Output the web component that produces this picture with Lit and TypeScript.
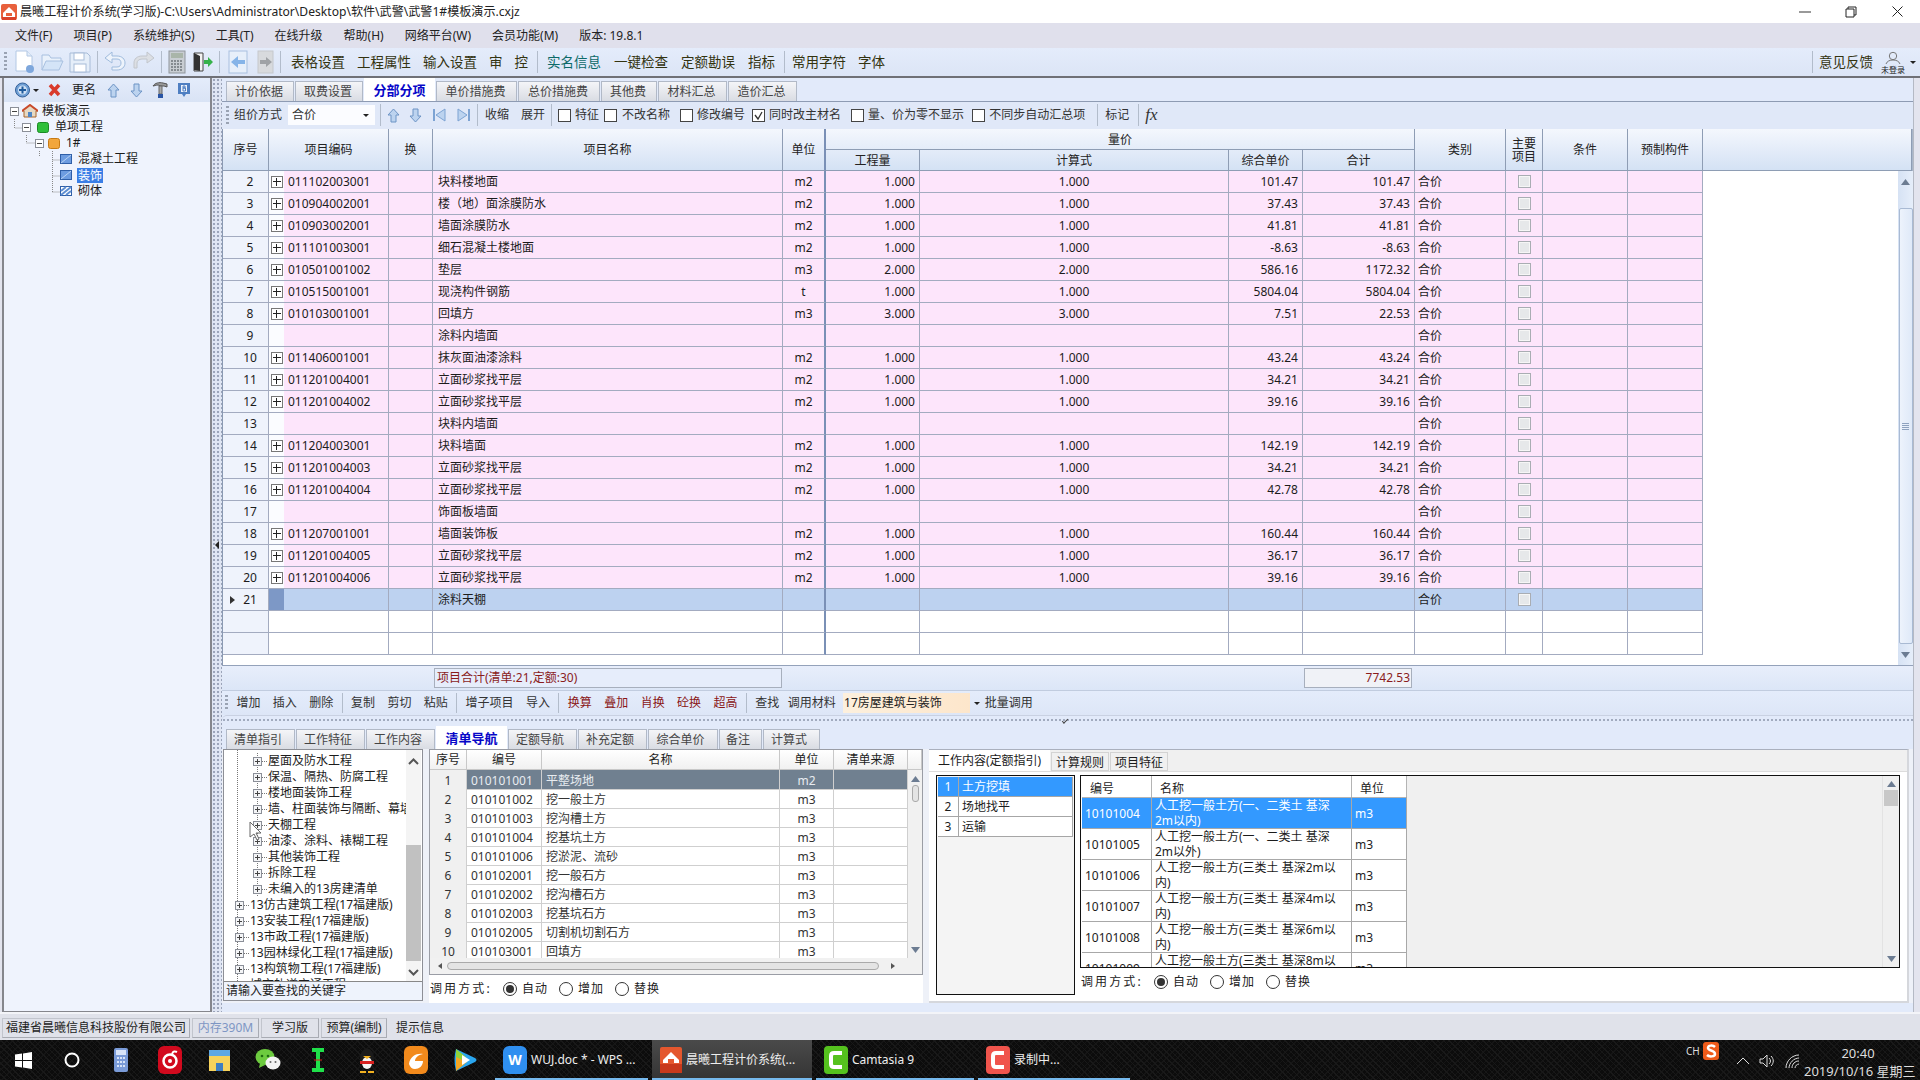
import { LitElement, html, css, nothing, svg } from "lit";
import { customElement } from "lit/decorators.js";

type Row = [string, string, string, string, string, string, string, string];
const D = "1.000";
const rows: Row[] = [
  ["2", "011102003001", "块料楼地面", "m2", D, D, "101.47", "101.47"],
  ["3", "010904002001", "楼（地）面涂膜防水", "m2", D, D, "37.43", "37.43"],
  ["4", "010903002001", "墙面涂膜防水", "m2", D, D, "41.81", "41.81"],
  ["5", "011101003001", "细石混凝土楼地面", "m2", D, D, "-8.63", "-8.63"],
  ["6", "010501001002", "垫层", "m3", "2.000", "2.000", "586.16", "1172.32"],
  ["7", "010515001001", "现浇构件钢筋", "t", D, D, "5804.04", "5804.04"],
  ["8", "010103001001", "回填方", "m3", "3.000", "3.000", "7.51", "22.53"],
  ["9", "", "涂料内墙面", "", "", "", "", ""],
  ["10", "011406001001", "抹灰面油漆涂料", "m2", D, D, "43.24", "43.24"],
  ["11", "011201004001", "立面砂浆找平层", "m2", D, D, "34.21", "34.21"],
  ["12", "011201004002", "立面砂浆找平层", "m2", D, D, "39.16", "39.16"],
  ["13", "", "块料内墙面", "", "", "", "", ""],
  ["14", "011204003001", "块料墙面", "m2", D, D, "142.19", "142.19"],
  ["15", "011201004003", "立面砂浆找平层", "m2", D, D, "34.21", "34.21"],
  ["16", "011201004004", "立面砂浆找平层", "m2", D, D, "42.78", "42.78"],
  ["17", "", "饰面板墙面", "", "", "", "", ""],
  ["18", "011207001001", "墙面装饰板", "m2", D, D, "160.44", "160.44"],
  ["19", "011201004005", "立面砂浆找平层", "m2", D, D, "36.17", "36.17"],
  ["20", "011201004006", "立面砂浆找平层", "m2", D, D, "39.16", "39.16"],
];
const navRows = [
  ["010101001", "平整场地", "m2"],
  ["010101002", "挖一般土方", "m3"],
  ["010101003", "挖沟槽土方", "m3"],
  ["010101004", "挖基坑土方", "m3"],
  ["010101006", "挖淤泥、流砂", "m3"],
  ["010102001", "挖一般石方", "m3"],
  ["010102002", "挖沟槽石方", "m3"],
  ["010102003", "挖基坑石方", "m3"],
  ["010102005", "切割机切割石方", "m3"],
  ["010103001", "回填方", "m3"],
];
const quotas = [
  ["10101004", "人工挖一般土方(一、二类土 基深\n2m以内)"],
  ["10101005", "人工挖一般土方(一、二类土 基深\n2m以外)"],
  ["10101006", "人工挖一般土方(三类土 基深2m以\n内)"],
  ["10101007", "人工挖一般土方(三类土 基深4m以\n内)"],
  ["10101008", "人工挖一般土方(三类土 基深6m以\n内)"],
  ["10101009", "人工挖一般土方(三类土 基深8m以\n内)"],
];
const lowerTree: [number, string][] = [
  [2, "屋面及防水工程"], [2, "保温、隔热、防腐工程"], [2, "楼地面装饰工程"],
  [2, "墙、柱面装饰与隔断、幕墙工程"], [2, "天棚工程"], [2, "油漆、涂料、裱糊工程"],
  [2, "其他装饰工程"], [2, "拆除工程"], [2, "未编入的13房建清单"],
  [1, "13仿古建筑工程(17福建版)"], [1, "13安装工程(17福建版)"], [1, "13市政工程(17福建版)"],
  [1, "13园林绿化工程(17福建版)"], [1, "13构筑物工程(17福建版)"], [1, "城市轨道交通工程"],
];

const ico = (w: number, h: number, body: unknown) =>
  html`<svg width=${w} height=${h} viewBox="0 0 ${w} ${h}">${body}</svg>`;

const icons = {
  app: ico(16, 16, svg`<rect width="16" height="16" rx="2" fill="#e8603c"/><path d="M2 9 8 3l6 6v5H2z" fill="#fff"/><path d="M5 9h6v3H5z" fill="#e8603c"/><rect x="1" y="13" width="14" height="3" fill="#d9412a"/>`),
  newf: ico(21, 24, svg`<path d="M2 1h11l5 5v15H2z" fill="#fff" stroke="#b3c8e4"/><path d="M13 1v5h5" fill="#e2ecf8" stroke="#b3c8e4"/><circle cx="16" cy="19" r="4" fill="#7ea7dc"/>`),
  open: ico(24, 22, svg`<path d="M2 19V4h7l2 3h10v3" fill="#e9f1fb" stroke="#a8c0e0"/><path d="M2 19l4-9h17l-4 9z" fill="#d4e4f7" stroke="#a8c0e0"/>`),
  save: ico(22, 22, svg`<path d="M1 2h17l3 3v16H1z" fill="#e5eef9" stroke="#a8bcd8"/><rect x="5" y="2" width="10" height="7" fill="#fff" stroke="#a8bcd8"/><rect x="5" y="13" width="12" height="8" fill="#fff" stroke="#a8bcd8"/>`),
  undo: ico(23, 22, svg`<path d="M1 7l7-6v4h5c5 0 8 3 8 7s-3 7-8 7H8v-3h5c3 0 4-2 4-4s-1-4-4-4H8v4z" fill="#edf3fb" stroke="#9fbbdd"/>`),
  redo: ico(23, 22, svg`<path d="M22 7l-7-6v4h-5C5 5 2 8 2 12v5h3v-5c0-2 2-4 5-4h5v4z" fill="#dcdfe4" stroke="#c2c6cc"/>`),
  calc: ico(18, 24, svg`<rect x="1" y="1" width="16" height="22" fill="#c8cdd2" stroke="#8f959c"/><rect x="3" y="3" width="12" height="5" fill="#a9b5a9"/><path d="M3 11h12M3 14h12M3 17h12M3 20h12" stroke="#858b90" stroke-width="2" stroke-dasharray="2 1"/>`),
  exit: ico(20, 20, svg`<path d="M1 1h9v18H1z" fill="#f2f2f2" stroke="#444"/><path d="M1 1l6 3v15l-6-1z" fill="#333"/><path d="M11 8h4V5l5 5-5 5v-3h-4z" fill="#36b24a"/>`),
  back: ico(20, 24, svg`<rect x="1" y="1" width="18" height="22" fill="#e7effa" stroke="#a9c0df"/><path d="M3 12l7-6v4h7v4h-7v4z" fill="#86b4e8"/>`),
  fwd: ico(17, 24, svg`<rect x="1" y="1" width="15" height="22" fill="#d8dadd" stroke="#c5c8cc"/><path d="M15 12l-6-5v3H3v4h6v3z" fill="#9fa2a6"/>`),
  upB: (d: boolean) => ico(13, 15, svg`<path d=${d ? "M6.500 14 1 8h3V1h5v7h3z" : "M6.500 1 1 7h3v7h5V7h3z"} fill="#bcd3ef" stroke="#6d94c5"/>`),
  first: ico(13, 14, svg`<path d="M1 1v12" stroke="#7da3d3" stroke-width="2"/><path d="M12 1v12L3 7z" fill="#bcd3ef" stroke="#7da3d3"/>`),
  last: ico(13, 14, svg`<path d="M12 1v12" stroke="#7da3d3" stroke-width="2"/><path d="M1 1v12l9-6z" fill="#bcd3ef" stroke="#7da3d3"/>`),
  plusC: ico(15, 16, svg`<circle cx="7.500" cy="8" r="7" fill="#6f9fd4" stroke="#335f98"/><circle cx="7.500" cy="8" r="4.500" fill="#cfe0f4"/><path d="M7.500 4.500v7M4 8h7" stroke="#1f5b9c" stroke-width="2"/>`),
  del: ico(13, 14, svg`<path d="M2 2l9 10M11 2 2 12" stroke="#d93a2b" stroke-width="3.500"/>`),
  hammer: ico(16, 18, svg`<path d="M1 5c2-3 6-4 10-3l4 1v3l-3-1H9L6 4C4 4 2 5 1 5z" fill="#9a9a9a" stroke="#555"/><path d="M7 5h3v8H7z" fill="#a9a9a9" stroke="#666"/><rect x="6" y="13" width="5" height="4" fill="#2a55a5"/>`),
  bmark: ico(14, 16, svg`<path d="M1 1h12v11H9l-2 3-2-3H1z" fill="#4f7fc2"/><rect x="4" y="3" width="6" height="7" fill="#fff" opacity=".9"/><path d="M6 4v5M6 4h2v2H6M6 6h2.500v3H6" stroke="#4f7fc2" fill="none"/>`),
  house: ico(16, 14, svg`<path d="M0 7 8 1l8 6-2 0v6H2V7z" fill="#e6d9c3" stroke="#a8642c"/><path d="M0 7 8 1l8 6" fill="none" stroke="#c94a2b" stroke-width="2"/><rect x="6" y="8" width="4" height="5" fill="#4f86c6"/>`),
  cube: (c: string, d: string, w = 12) => ico(w, 11, svg`<rect x=".5" y=".5" width=${w - 1} height="10" rx="2" fill=${c} stroke=${d}/>`),
  blue: ico(12, 10, svg`<rect x=".5" y=".5" width="11" height="9" fill="#6d9ce0" stroke="#2f5fa8"/><path d="M1 9 11 1" stroke="#b9d3f3"/>`),
  stripe: ico(12, 10, svg`<rect x=".5" y=".5" width="11" height="9" fill="#fff" stroke="#2f5fa8"/><path d="M1 9 11 1M1 5l5-4M6 9l5-4" stroke="#5d8dd2" stroke-width="2"/>`),
  user: ico(16, 14, svg`<circle cx="8" cy="5" r="3.700" fill="none" stroke="#777"/><path d="M1 13c1-3 4-4 7-4s6 1 7 4" fill="none" stroke="#777"/>`),
  up: ico(9, 6, svg`<path d="M4.500 0 9 6H0z" fill="#6c7c92"/>`),
  down: ico(9, 6, svg`<path d="M4.500 6 9 0H0z" fill="#6c7c92"/>`),
  chevU: ico(11, 7, svg`<path d="M1 6 5.500 1.500 10 6" fill="none" stroke="#555" stroke-width="2"/>`),
  chevD: ico(11, 7, svg`<path d="M1 1l4.500 4.500L10 1" fill="none" stroke="#555" stroke-width="2"/>`),
  check: ico(11, 11, svg`<path d="M2 5l3 4 4-7" fill="none" stroke="#333" stroke-width="1.300"/>`),
  cursor: ico(14, 20, svg`<path d="M1 1v15l4-3 3 6 2-1-3-6h5z" fill="#fff" stroke="#666"/>`),
  restore: ico(12, 12, svg`<path d="M3 3V1h8v8H9M1 3h8v8H1z" fill="#fff" stroke="#222"/>`),
  close: ico(11, 11, svg`<path d="M.5.500l10 10M10.500.500l-10 10" stroke="#222"/>`),
  win: ico(17, 17, svg`<path d="M0 2.500 7 1.500v6.500H0zM8 1.400 17 0v8H8zM0 9h7v6.500l-7-1zM8 9h9v8l-9-1.400z" fill="#fff"/>`),
  ring: ico(16, 16, svg`<circle cx="8" cy="8" r="6.500" fill="none" stroke="#fff" stroke-width="2"/>`),
  tcalc: ico(16, 26, svg`<rect x="1" y="1" width="14" height="24" rx="2" fill="#7a9bd8"/><rect x="3" y="3" width="10" height="5" fill="#d8e4f8"/><path d="M4 11h8M4 15h8M4 19h8" stroke="#d8e4f8" stroke-width="2" stroke-dasharray="2 1"/>`),
  netease: ico(24, 28, svg`<rect width="24" height="28" rx="6" fill="#d20a1e"/><circle cx="12" cy="15" r="6.500" fill="none" stroke="#fff" stroke-width="2.500"/><circle cx="12" cy="15" r="2" fill="#fff"/><path d="M14 8c1-3 3-3 5-2" fill="none" stroke="#fff" stroke-width="2"/>`),
  folder: ico(23, 25, svg`<path d="M1 2h21v21H1z" fill="#f7d35b"/><path d="M1 2h21v6H1z" fill="#5ea8e3"/><rect x="8" y="15" width="7" height="8" fill="#3f7fc2"/>`),
  wechat: ico(26, 24, svg`<ellipse cx="10" cy="9" rx="9.500" ry="8" fill="#6dcb3f"/><path d="M5 15l-1 5 6-3z" fill="#6dcb3f"/><ellipse cx="18" cy="15" rx="7.500" ry="6.500" fill="#f2f2f2"/><circle cx="7" cy="8" r="1.300" fill="#1f6b12"/><circle cx="13" cy="8" r="1.300" fill="#1f6b12"/><circle cx="15.500" cy="14" r="1" fill="#666"/><circle cx="20.500" cy="14" r="1" fill="#666"/>`),
  beam: ico(14, 26, svg`<path d="M1 1h12v4H9v16h4v4H1v-4h4V5H1z" fill="#1fe04a"/><path d="M3 13h8" stroke="#d81b1b"/>`),
  qq: ico(18, 26, svg`<ellipse cx="9" cy="11" rx="7" ry="9.500" fill="#1b1b1b"/><ellipse cx="9" cy="16" rx="5" ry="6" fill="#f5f5f5"/><path d="M2 14h14v3H2z" fill="#d82020"/><path d="M5 9h8l-4 3z" fill="#f2b120"/><path d="M2 24h6v2H2zM10 24h6v2h-6z" fill="#f2b120"/>`),
  uc: ico(24, 28, svg`<rect width="24" height="28" rx="6" fill="#f28a1c"/><path d="M5 18c1-8 8-11 14-10-5 1-8 4-8 7h8c0 5-4 8-8 8-3 0-5-2-6-5z" fill="#fff"/>`),
  video: ico(24, 26, svg`<path d="M3 2c-2 7-2 15 0 22l19-9c2-1 2-3 0-4z" fill="#2aa6ef"/><path d="M3 2l10 8-10 6z" fill="#8fd43a"/><path d="M3 24l11-9-11-5z" fill="#f4a724"/><path d="M9 8v10l8-5z" fill="#fff"/>`),
  tapp: ico(22, 26, svg`<rect width="22" height="26" rx="2" fill="#e4572e"/><path d="M3 13 11 5l8 8v3H3z" fill="#fff"/><path d="M8 12h6v4H8z" fill="#e4572e"/><rect y="17" width="22" height="9" fill="#c8391c"/>`),
  cam: ico(24, 28, svg`<rect width="24" height="28" rx="4" fill="#55c21e"/><path d="M18 7h-8c-2 0-3 1-3 3v8c0 2 1 3 3 3h8" fill="none" stroke="#fff" stroke-width="4"/>`),
  rec: ico(24, 28, svg`<rect width="24" height="28" rx="4" fill="#f0544c"/><path d="M18 7h-8c-2 0-3 1-3 3v8c0 2 1 3 3 3h8" fill="none" stroke="#fff" stroke-width="4"/>`),
  sogou: ico(16, 18, svg`<rect width="16" height="18" rx="3" fill="#ee5b1a"/><path d="M12 5c-2-2-7-2-7 1 0 3 7 2 7 6 0 3-6 3-8 1" fill="none" stroke="#fff" stroke-width="2.500"/>`),
  caretT: ico(14, 8, svg`<path d="M1 7l6-6 6 6" fill="none" stroke="#ddd"/>`),
  speaker: ico(16, 16, svg`<path d="M1 6h3l4-4v12l-4-4H1z" fill="none" stroke="#ddd"/><path d="M10 5c2 2 2 4 0 6M12 3c3 3 3 7 0 10" fill="none" stroke="#ddd"/>`),
  wifi: ico(16, 16, svg`<path d="M2 15C2 8 8 2 15 2M5 15c0-5 5-10 10-10M8 15c0-4 3-7 7-7M11 15c0-2 2-4 4-4" fill="none" stroke="#ddd"/>`),
};

@customElement("app-root")
export class AppRoot extends LitElement {
  static styles = css`
    :host { display: block; width: 1920px; height: 1080px; overflow: hidden; position: relative; }
    * { box-sizing: border-box; }
    .app { width: 1920px; height: 1080px; display: flex; flex-direction: column; background: #e3e4ee;
      font: 12px/16px "Noto Sans", "Noto Sans CJK SC", sans-serif; color: #1c1c1c; }
    svg { display: block; flex: none; }
    .title { height: 23px; background: #fff; display: flex; align-items: center; padding: 0 0 0 1px; font-size: 12.1px; color: #222; }
    .title-t { margin-left: 3px; flex: 1; white-space: nowrap; }
    .winb { display: flex; align-items: center; }
    .winb span { width: 46px; display: flex; justify-content: center; }
    .minb { width: 12px; height: 2px; background: #999; }
    .menu { height: 25px; background: #e0e0ec; display: flex; align-items: center; gap: 21px; padding: 1px 0 0 15px; color: #222; }
    .tb { height: 30px; background: linear-gradient(#e4ecfb, #dce5f6); border-bottom: 2px solid #6f7076; display: flex; align-items: center; padding-left: 4px; font-size: 13.5px; color: #333310; position: relative; }
    .grip { width: 3px; align-self: stretch; margin: 4px 0; background: repeating-linear-gradient(#9aa3b3 0 2px, transparent 2px 4px); flex: none; }
    .g5 { display: flex; align-items: center; gap: 5px; }
    .vsep { width: 1px; height: 22px; background: #b2bccb; flex: none; margin: 0 6px; }
    .tb-txt { display: flex; align-items: center; gap: 12px; white-space: nowrap; }
    .tb-txt.w { gap: 13px; }
    .teal { color: #0c6a68; }
    .fill { flex: 1; }
    .user { width: 24px; display: flex; flex-direction: column; align-items: center; margin: 0 5px 0 8px; }
    .user small { font-size: 8px; line-height: 9px; color: #222; white-space: nowrap; }
    .body { flex: 1; display: flex; min-height: 0; }
    .lpanel { width: 210px; margin-left: 2px; border-left: 2px solid #85868c; border-right: 2px solid #85868c; border-bottom: 1px solid #85868c; display: flex; flex-direction: column; background: #eff3fd; }
    .ltb { height: 24px; background: linear-gradient(#e4ecfb, #d9e3f5); display: flex; align-items: center; padding-left: 11px; flex: none; }
    .ltree { flex: 1; padding-top: 1px; position: relative; }
    .tr { height: 16px; display: flex; align-items: center; white-space: nowrap; }
    .trtxt { padding: 0 1px; line-height: 15px; }
    .hl { background: #3a7ee6; color: #fff; }
    .pbox { width: 9px; height: 9px; border: 1px solid #8b8f98; background: linear-gradient(#444, #444) center/5px 1px no-repeat, #fff; flex: none; }
    .pbox.pl { background: linear-gradient(#444, #444) center/5px 1px no-repeat, linear-gradient(#444, #444) center/1px 5px no-repeat, #f4f5f7; }
    .conn { position: absolute; left: 0; top: 0; pointer-events: none; }
    .split { width: 10px; display: flex; align-items: center; justify-content: center; background-color: #dfe5f3;
      background-image: radial-gradient(#9aa3b8 0.7px, transparent 1px); background-size: 4px 4px; flex: none; }
    .split i { width: 0; height: 0; border: 4px solid transparent; border-right-color: #222; margin-left: -4px; }
    .main { width: 1692px; display: flex; flex-direction: column; min-height: 0; background: #e2eafa; border-right: 1px solid #b4b9c4; }
    .tabs { display: flex; align-items: flex-end; gap: 1px; padding-left: 4px; flex: none; }
    .tab { height: 20px; text-align: center; border: 1px solid #b1b9c7; border-bottom: none; background: linear-gradient(#f4f5f8, #d9dce3); color: #444; line-height: 20px; flex: none; white-space: nowrap; }
    .tab.on { height: 23px; background: #fff; color: #0606c8; font-weight: 700; font-size: 13px; line-height: 22px; border-color: #fff; }
    .t1 { height: 23px; }
    .t1 .tab:not(.on) { padding-right: 2px; }
    .stb { height: 28px; border-top: 1px solid #8e9bb3; background: #e0e8f8; display: flex; align-items: center; padding: 0 0 1px 4px; flex: none; color: #333; white-space: nowrap; }
    .sel { width: 87px; height: 20px; background: #fbfcff; display: flex; align-items: center; justify-content: space-between; padding: 0 6px 0 4px; margin-left: 6px; }
    .sel i { width: 0; height: 0; border: 3px solid transparent; border-top-color: #222; margin-top: 3px; }
    .stxt { display: flex; align-items: center; gap: 4px; }
    .cb { width: 13px; height: 13px; border: 1px solid #444; background: #fff; display: inline-flex; align-items: center; justify-content: center; flex: none; }
    .sheet { height: 536px; flex: none; display: flex; flex-direction: column; border-left: 1px solid #8b9ab3; background: #fff; margin-top: 0; }
    .hd { height: 42px; display: grid; grid-template-columns: 46px 120px 44px 350px 43px 94px 309px 74px 112px 91px 37px 85px 75px 1fr; grid-template-rows: 21px 21px; background: linear-gradient(#f4f7fd, #d3e1f4); flex: none; border-right: 1px solid #a9b6c9; color: #222; }
    .hc { display: flex; align-items: center; justify-content: center; border-right: 1px solid #8e9db4; border-bottom: 1px solid #8e9db4; text-align: center; line-height: 13px; }
    .span2 { grid-row: span 2; }
    .span4 { grid-column: span 4; }
    .thick { border-right: 2px solid #7a90b6; }
    .sb { display: flex; flex: 1; min-height: 0; }
    .grid { width: 1480px; flex: none; }
    .rw { height: 22px; display: grid; grid-template-columns: 46px 120px 44px 350px 43px 94px 309px 74px 112px 91px 37px 85px 75px; background: #fde5fb; }
    .rw > div { border-right: 1px solid #a3abc0; border-bottom: 1px solid #a3abc0; display: flex; align-items: center; padding: 0 3px; white-space: nowrap; overflow: hidden; }
    .rw > div.thick { border-right: 2px solid #7a90b6; }
    .rw > .no { background: #eff3fc; justify-content: center; padding-left: 12px; position: relative; }
    .rw > .code { padding: 0; }
    .codeL { width: 15px; align-self: stretch; background: #fbfcff; display: flex; align-items: center; justify-content: center; flex: none; }
    .pm { width: 12px; height: 12px; border: 1px solid #777; background: linear-gradient(#222, #222) center/8px 1.300px no-repeat, linear-gradient(#222, #222) center/1.300px 8px no-repeat, #fff; }
    .codeT { padding-left: 4px; letter-spacing: 0; }
    .rw > .r { justify-content: flex-end; padding-right: 4px; }
    .rw > .c { justify-content: center; }
    .mc { width: 13px; height: 13px; border: 1px solid #a9adb3; background: #e6e8ea; box-shadow: inset 0 0 0 1px #f6f6f6; }
    .rw.sel1 { background: #bdd2f0; }
    .rw.sel1 .codeL { background: #7d98c6; }
    .rw.empty { background: #fff; }
    .rw.empty .codeL { background: #fff; }
    .ptr { position: absolute; left: 7px; top: 7px; width: 0; height: 0; border: 4px solid transparent; border-left: 5px solid #333; }
    .white { flex: 1; background: #fff; }
    .vs { width: 15px; background: linear-gradient(90deg, #d6e2f4, #e6eefa); display: flex; flex-direction: column; align-items: center; flex: none; padding: 8px 0 7px; }
    .vthumb { width: 14px; flex: 1; margin: 23px 0 8px; border: 1px solid #a9bad3; background: linear-gradient(90deg, #edf3fc, #dfe9f8); display: flex; align-items: center; justify-content: center; border-radius: 2px; }
    .vthumb i { width: 7px; height: 7px; background: repeating-linear-gradient(#8ea2bf 0 1px, transparent 1px 2px); }
    .sum { height: 25px; flex: none; border-top: 1px solid #94a2ba; background: linear-gradient(#e8eefb, #dce6f7); display: grid; grid-template-columns: 212px 348px 522px 108px; align-items: center; color: #8a1c1c; }
    .sumb { height: 20px; border: 1px solid #a7afbd; display: flex; align-items: center; padding: 0 2px; background: #e6edfb; white-space: nowrap; }
    .sumr { justify-content: flex-end; background: #f0f2f7; padding-right: 1px; }
    .btb { height: 25px; flex: none; border-top: 1px solid #c1ccdf; background: linear-gradient(#e4ecfb, #dde6f7); display: flex; align-items: center; gap: 12.4px; padding-left: 3px; color: #333; white-space: nowrap; }
    .btb .grip { margin: 4px -4px 4px 0; }
    .btb .vsep { margin: 0 -4px; height: 20px; }
    .red { color: #8a1616; }
    .peach { width: 127px; height: 20px; background: linear-gradient(90deg, #fdf0dd, #fde6cb); display: flex; align-items: center; padding-left: 1px; margin-left: -5px; color: #222; }
    .caret { width: 0; height: 0; border: 3px solid transparent; border-top-color: #222; margin: 3px 0 0 -8px; }
    .dots { height: 10px; flex: none; border-radius: 5px 0 0 0; border-top: 1px solid #c9d1e2; background-color: #e2eafa; background-image: radial-gradient(#a0a9bd 0.7px, transparent 1px); background-size: 4px 4px; background-position: 0 2px; background-repeat: repeat-x; position: relative; }
    .dots i { position: absolute; left: 840px; top: 3px; width: 6px; height: 3px; border-bottom: 1px solid #444; border-left: 1px solid #444; transform: rotate(-45deg); }
    .t2 { height: 24px; }
    .t2 .tab:not(.on) { padding-right: 5px; }
    .lower { height: 254px; flex: none; display: flex; padding-left: 1px; background: #eef1f8; }
    .col1 { width: 200px; flex: none; display: flex; flex-direction: column; border: 1px solid #8d8f96; border-right: 1px solid #8d8f96; margin-bottom: 2px; }
    .lt { height: 231px; background: #fff; display: flex; flex: none; overflow: hidden; }
    .ltl { width: 182px; flex: none; overflow: hidden; background-image: linear-gradient(#777 50%, transparent 50%); background-size: 1px 2px; background-position: 13px 0; background-repeat: repeat-y; }
    .lr { height: 16px; display: flex; align-items: center; white-space: nowrap; background-image: none; padding-left: 11px; margin-top: 0; }
    .lr.lv2 { padding-left: 29px; background-image: linear-gradient(#777 50%, transparent 50%); background-size: 1px 2px; background-position: 33px 0; background-repeat: repeat-y; }
    .lr:first-child { margin-top: 3px; }
    .tick { width: 5px; border-top: 1px dotted #777; flex: none; margin-right: 1px; }
    .lsc { width: 15px; flex: none; background: #f4f4f4; display: flex; flex-direction: column; align-items: center; justify-content: space-between; padding: 8px 0 5px; margin-left: 0; }
    .lsct { width: 15px; height: 116px; background: #c1c1c1; margin-top: 71px; }
    .search { flex: 1; background: #eef3fc; border-top: 1px solid #888; display: flex; align-items: center; padding-left: 2px; color: #222; white-space: nowrap; }
    .col2 { width: 494px; flex: none; margin-left: 6px; display: flex; flex-direction: column; background: #fff; }
    .nav { height: 226px; display: flex; flex-direction: column; border: 1px solid #9a9da5; flex: none; background: #f1f1f1; }
    .nh { height: 20px; display: grid; grid-template-columns: 37px 75px 238px 54px 74px 1fr; background: linear-gradient(#fff, #f0f0f0); flex: none; }
    .nh div { border-right: 1px solid #c8c8c8; border-bottom: 1px solid #c8c8c8; display: flex; align-items: center; justify-content: center; padding-top: 1px; }
    .nb { height: 188px; display: flex; flex: none; }
    .nrows { width: 478px; flex: none; overflow: hidden; background: #fff; }
    .nr { height: 19px; display: grid; grid-template-columns: 37px 75px 238px 54px 74px; }
    .nr div { border-right: 1px solid #cfcfcf; border-bottom: 1px solid #cfcfcf; display: flex; align-items: center; padding: 2px 4px 0; white-space: nowrap; color: #333; }
    .nr .n0 { background: #f0f0f0; justify-content: center; padding-top: 3px; }
    .nr .u { justify-content: center; }
    .nr.on div:not(.n0) { background: #708090; color: #e8ecf0; }
    .nvs { flex: 1; display: flex; flex-direction: column; align-items: center; padding: 6px 0 5px; }
    .nvs .t { width: 7px; height: 17px; border: 1px solid #aaa; border-radius: 3px; background: #e4e4e4; margin: 3px 0 auto; }
    .nhs { flex: 1; display: flex; align-items: center; padding: 0 24px 0 5px; gap: 5px; background: #f1f1f1; }
    .nhs b { flex: 1; height: 8px; border: 1px solid #aaa; border-radius: 4px; background: #e4e4e4; margin-right: 7px; }
    .tl { width: 0; height: 0; border: 3px solid transparent; border-right: 4px solid #555; flex: none; }
    .tr2 { width: 0; height: 0; border: 3px solid transparent; border-left: 4px solid #555; flex: none; }
    .radios { display: flex; align-items: center; height: 28px; padding-left: 1px; color: #222; white-space: nowrap; }
    .rdl { letter-spacing: 2.100px; width: 73px; }
    .rd { width: 14px; height: 14px; border-radius: 50%; border: 1px solid #333; background: #fff; display: flex; align-items: center; justify-content: center; flex: none; }
    .rd.on::after { content: ""; width: 8px; height: 8px; background: #333; border-radius: 50%; }
    .rdt { width: 42px; padding-left: 5px; letter-spacing: 1px; }
    .col3 { width: 980px; flex: none; margin-left: 6px; background: #fff; display: flex; flex-direction: column; border-right: 2px solid #d5d7dc; border-bottom: 2px solid #d5d7dc; border-top: 1px solid #aab0bd; }
    .rtabs { height: 22px; background: #f0f0f0; display: flex; flex: none; border-bottom: 1px solid #dcdcdc; align-items: flex-end; }
    .rt { height: 19px; border: 1px solid #d3d3d3; background: #f0f0f0; line-height: 19px; text-align: center; flex: none; white-space: nowrap; margin-right: 1px; }
    .rt.on { height: 21px; background: #fff; border: none; line-height: 22px; }
    .rbody { flex: 1; display: flex; padding: 3px 7px 0 7px; gap: 5px; min-height: 0; }
    .clist { width: 139px; height: 220px; border: 1px solid #111; background: #f4f4f4; padding: 1px; flex: none; }
    .cr { height: 20px; display: grid; grid-template-columns: 21px 1fr; background: #fff; }
    .cr div { border-right: 1px solid #a6a6a6; border-bottom: 1px solid #a6a6a6; display: flex; align-items: center; padding: 0 3px; justify-content: flex-start; }
    .cr div:first-child { justify-content: center; }
    .cr.on { background: #3399ff; color: #fff; }
    .qwrap { flex: 1; display: flex; flex-direction: column; min-width: 0; }
    .qbox { height: 193px; border: 1px solid #111; display: flex; background: #f0f0f0; flex: none; }
    .qgrid { width: 326px; flex: none; overflow: hidden; background: #fff; padding-left: 1px; }
    .qh, .qr { display: grid; grid-template-columns: 70px 200px 55px; }
    .qh { height: 21px; }
    .qh div { border-right: 1px solid #b4b4b4; border-bottom: 1px solid #b4b4b4; padding: 5px 0 0 8px; }
    .qr { height: 31px; }
    .qr div { border-right: 1px solid #a8a8a8; border-bottom: 1px solid #a8a8a8; display: flex; align-items: center; padding: 2px 3px 0; white-space: pre-line; line-height: 15px; }
    .qr .nm { align-items: flex-start; padding: 1px 3px 0; }
    .qr.on { background: #3399ff; color: #fff; }
    .qfill { flex: 1; }
    .qsc { width: 17px; flex: none; background: #f0f0f0; display: flex; flex-direction: column; align-items: center; padding: 5px 0; border-left: 1px solid #e3e3e3; }
    .qsc .t { width: 14px; height: 16px; background: #c8c8c8; margin: 3px 0 auto; }
    .status { height: 28px; flex: none; background: #e0e2ea; border-top: 2px solid #f3f4f8; display: flex; align-items: center; padding: 1px 0 0 2px; gap: 2px; color: #222; white-space: nowrap; }
    .st { height: 20px; border: 1px solid #c2c5cd; border-right-color: #a8abb3; border-bottom-color: #a8abb3; display: flex; align-items: center; justify-content: center; flex: none; }
    .st.blue { color: #7e96c4; }
    .task { height: 40px; flex: none; background-color: #0c0c0c; background-image: repeating-linear-gradient(45deg, #191919 0 1px, transparent 1px 4px), repeating-linear-gradient(-45deg, #151515 0 1px, transparent 1px 4px); display: grid; grid-template-columns: 495px 157px 164px 162px 156px 1fr; align-items: stretch; color: #eee; white-space: nowrap; }
    .ticons { display: flex; align-items: center; }
    .ti { width: 49.200px; display: flex; justify-content: center; flex: none; }
    .ti.f { width: 47px; }
    .tapp { display: flex; align-items: center; gap: 4px; padding: 2px 0 0 8px; border-bottom: 2px solid #76b9ed; margin-right: 4px; overflow: hidden; }
    .tapp.on { background: linear-gradient(#4a4a4a, #353535); }
    .wps { width: 24px; height: 28px; border-radius: 6px; background: #2f8ff0; color: #fff; display: flex; align-items: center; justify-content: center; font-weight: 700; font-size: 14px; flex: none; }
    .tray { position: relative; display: flex; align-items: center; justify-content: flex-end; font-size: 12px; color: #ddd; }
    .tr-i { display: flex; align-items: center; gap: 9px; margin-right: 4px; align-self: flex-end; padding-bottom: 11px; }
    .ch { display: flex; gap: 3px; align-items: center; position: absolute; left: 552px; top: 2px; font-size: 10px; }
    .clock { width: 108px; text-align: center; line-height: 18px; margin-right: 8px; padding-top: 3px; font-size: 13px; }
    .mouse { position: absolute; left: 249px; top: 821px; }
  `;

  private tabs(items: [string, number][], on: number) {
    return items.map(([t, w], i) => html`<div class="tab ${i === on ? "on" : ""}" style="width:${w}px">${t}</div>`);
  }

  private cell(r: Row, mode = "") {
    const [no, code, name, unit, q, f, p, t] = r;
    return html`<div class="rw ${mode}">
      <div class="no">${mode === "sel1" ? html`<i class="ptr"></i>` : nothing}${no}</div>
      <div class="code"><span class="codeL">${code ? html`<span class="pm"></span>` : nothing}</span><span class="codeT">${code}</span></div>
      <div></div>
      <div style="padding-left:5px">${name}</div>
      <div class="c thick">${unit}</div>
      <div class="r">${q}</div>
      <div class="c">${f}</div>
      <div class="r">${p}</div>
      <div class="r">${t}</div>
      <div>${mode === "empty" ? "" : "合价"}</div>
      <div class="c">${mode === "empty" ? nothing : html`<span class="mc"></span>`}</div>
      <div></div>
      <div></div>
    </div>`;
  }

  private navTable() {
    return html`<div class="nav">
      <div class="nh"><div>序号</div><div>编号</div><div>名称</div><div>单位</div><div>清单来源</div><div></div></div>
      <div class="nb">
        <div class="nrows">
          ${navRows.map((r, i) => html`<div class="nr ${i === 0 ? "on" : ""}"><div class="n0">${i + 1}</div><div>${r[0]}</div><div>${r[1]}</div><div class="u">${r[2]}</div><div></div></div>`)}
        </div>
        <div class="nvs">${icons.up}<span class="t"></span>${icons.down}</div>
      </div>
      <div class="nhs"><i class="tl"></i><b></b><i class="tr2"></i></div>
    </div>`;
  }

  private radios() {
    return html`<div class="radios"><span class="rdl">调用方式:</span>
      <span class="rd on"></span><span class="rdt">自动</span>
      <span class="rd"></span><span class="rdt">增加</span>
      <span class="rd"></span><span class="rdt">替换</span></div>`;
  }

  render() {
    return html`<div class="app">
      <div class="title">${icons.app}<span class="title-t">晨曦工程计价系统(学习版)-C:\\Users\\Administrator\\Desktop\\软件\\武警\\武警1#模板演示.cxjz</span>
        <div class="winb"><span><i class="minb"></i></span><span>${icons.restore}</span><span>${icons.close}</span></div></div>
      <div class="menu">${["文件(F)", "项目(P)", "系统维护(S)", "工具(T)", "在线升级", "帮助(H)", "网络平台(W)", "会员功能(M)", "版本: 19.8.1"].map((m) => html`<span>${m}</span>`)}</div>
      <div class="tb">
        <i class="grip"></i>
        <div class="g5" style="margin-left:7px">${icons.newf}${icons.open}${icons.save}</div>
        <i class="vsep"></i><div class="g5">${icons.undo}${icons.redo}</div>
        <i class="vsep"></i><div class="g5" style="gap:7px">${icons.calc}${icons.exit}</div>
        <i class="vsep" style="margin-right:8px"></i><div class="g5" style="gap:9px">${icons.back}${icons.fwd}</div>
        <i class="vsep" style="margin-right:10px"></i>
        <div class="tb-txt"><span>表格设置</span><span>工程属性</span><span>输入设置</span><span>审</span><span>控</span></div>
        <i class="vsep" style="margin:0 9px"></i>
        <div class="tb-txt w"><span class="teal">实名信息</span><span>一键检查</span><span>定额勘误</span><span>指标</span></div>
        <i class="vsep" style="margin:0 7px 0 9px"></i>
        <div class="tb-txt"><span>常用字符</span><span>字体</span></div>
        <span class="fill"></span>
        <i class="vsep"></i><span>意见反馈</span>
        <div class="user">${icons.user}<small>未登录</small></div><span class="caret" style="margin:3px 4px 0 0"></span>
      </div>
      <div class="body">
        <div class="lpanel">
          <div class="ltb">${icons.plusC}<span class="caret" style="margin:3px 9px 0 3px"></span>${icons.del}<span style="margin:0 11px 0 11px">更名</span>${icons.upB(false)}<span style="width:10px"></span>${icons.upB(true)}<span style="width:9px"></span>${icons.hammer}<span style="width:9px"></span>${icons.bmark}</div>
          <div class="ltree">
            <svg class="conn" width="80" height="110"><path d="M10.500 17V26h8M22.500 33V41h9M35.500 49V54M48.500 49V90M48.500 58h7M48.500 74h7M48.500 90h7" fill="none" stroke="#888" stroke-dasharray="1 1"/></svg>
            <div class="tr" style="padding-left:6px"><i class="pbox"></i><span style="margin:0 4px 0 3px">${icons.house}</span>模板演示</div>
            <div class="tr" style="padding-left:18px"><i class="pbox"></i><span style="margin:0 6px">${icons.cube("#2fbf3a", "#1c8a25")}</span>单项工程</div>
            <div class="tr" style="padding-left:31px"><i class="pbox"></i><span style="margin:0 6px 0 4px">${icons.cube("#f2a63c", "#c77a14")}</span>1#</div>
            <div class="tr" style="padding-left:56px"><span style="margin-right:6px">${icons.blue}</span>混凝土工程</div>
            <div class="tr" style="padding-left:56px"><span style="margin-right:5px">${icons.blue}</span><span class="trtxt hl">装饰</span></div>
            <div class="tr" style="padding-left:56px"><span style="margin-right:6px">${icons.stripe}</span>砌体</div>
          </div>
        </div>
        <div class="split"><i></i></div>
        <div class="main">
          <div class="tabs t1">${this.tabs([["计价依据", 68], ["取费设置", 68], ["分部分项", 71], ["单价措施费", 81], ["总价措施费", 82], ["其他费", 56], ["材料汇总", 69], ["造价汇总", 69]], 2)}</div>
          <div class="stb">
            <i class="grip"></i><span style="margin-left:5px">组价方式</span>
            <div class="sel"><span>合价</span><i></i></div>
            <i class="vsep" style="margin:0 6px 0 5px"></i>
            <div class="g5" style="gap:9px">${icons.upB(false)}${icons.upB(true)}</div><span style="width:11px"></span>
            <div class="g5" style="gap:11px">${icons.first}${icons.last}</div>
            <i class="vsep" style="margin:0 7px 0 7px"></i>
            <div class="tb-txt"><span>收缩</span><span>展开</span></div>
            <i class="vsep" style="margin:0 6px 0 6px"></i>
            <div class="stxt"><i class="cb"></i><span>特征</span></div>
            <div class="stxt" style="margin-left:5px"><i class="cb"></i><span style="margin-left:1px">不改名称</span></div>
            <div class="stxt" style="margin-left:10px"><i class="cb"></i><span>修改编号</span></div>
            <div class="stxt" style="margin-left:7px"><i class="cb">${icons.check}</i><span>同时改主材名</span></div>
            <div class="stxt" style="margin-left:10px"><i class="cb"></i><span>量、价为零不显示</span></div>
            <div class="stxt" style="margin-left:8px"><i class="cb"></i><span>不同步自动汇总项</span></div>
            <i class="vsep" style="margin:0 7px 0 12px"></i><span>标记</span>
            <i class="vsep" style="margin:0 6px 0 9px"></i><span style="font:italic 17px 'Liberation Serif',serif">fx</span>
          </div>
          <div class="sheet">
            <div class="hd">
              <div class="hc span2">序号</div><div class="hc span2">项目编码</div><div class="hc span2">换</div><div class="hc span2">项目名称</div><div class="hc span2 thick">单位</div>
              <div class="hc span4">量价</div>
              <div class="hc span2">类别</div><div class="hc span2">主要<br />项目</div><div class="hc span2">条件</div><div class="hc span2">预制构件</div><div class="hc span2"></div>
              <div class="hc">工程量</div><div class="hc">计算式</div><div class="hc">综合单价</div><div class="hc">合计</div>
            </div>
            <div class="sb">
              <div class="grid">
                ${rows.map((r) => this.cell(r))}
                ${this.cell(["21", "", "涂料天棚", "", "", "", "", ""], "sel1")}
                ${this.cell(["", "", "", "", "", "", "", ""], "empty")}
                ${this.cell(["", "", "", "", "", "", "", ""], "empty")}
              </div>
              <div class="white"></div>
              <div class="vs">${icons.up}<div class="vthumb"><i></i></div>${icons.down}</div>
            </div>
          </div>
          <div class="sum"><span></span><div class="sumb">项目合计(清单:21,定额:30)</div><span></span><div class="sumb sumr">7742.53</div></div>
          <div class="btb">
            <i class="grip"></i><span>增加</span><span>插入</span><span>删除</span><i class="vsep"></i>
            <span>复制</span><span>剪切</span><span>粘贴</span><i class="vsep"></i>
            <span>增子项目</span><span>导入</span><i class="vsep"></i>
            <span class="red">换算</span><span class="red">叠加</span><span class="red">肖换</span><span class="red">砼换</span><span class="red">超高</span><i class="vsep"></i>
            <span>查找</span><span style="margin-left:-4px">调用材料</span>
            <div class="peach" style="margin-left:-5px">17房屋建筑与装饰</div><span class="caret" style="margin:3px 0 0 -8px"></span><span style="margin-left:-8px">批量调用</span>
          </div>
          <div class="dots"><i></i></div>
          <div class="tabs t2">${this.tabs([["清单指引", 69], ["工作特征", 69], ["工作内容", 69], ["清单导航", 71], ["定额导航", 69], ["补充定额", 69], ["综合单价", 70], ["备注", 43], ["计算式", 57]], 3)}</div>
          <div class="lower">
            <div class="col1">
              <div class="lt">
                <div class="ltl">
                  ${lowerTree.map(([lv, t]) => html`<div class="lr lv${lv}"><i class="pbox pl"></i><i class="tick"></i>${t}</div>`)}
                </div>
                <div class="lsc">${icons.chevU}<i class="lsct"></i>${icons.chevD}</div>
              </div>
              <div class="search">请输入要查找的关键字</div>
            </div>
            <div class="col2">${this.navTable()}${this.radios()}</div>
            <div class="col3">
              <div class="rtabs">
                <div class="rt on" style="width:121px">工作内容(定额指引)</div>
                <div class="rt" style="width:58px">计算规则</div><div class="rt" style="width:58px">项目特征</div>
              </div>
              <div class="rbody">
                <div class="clist">
                  ${["土方挖填", "场地找平", "运输"].map((t, i) => html`<div class="cr ${i === 0 ? "on" : ""}"><div>${i + 1}</div><div>${t}</div></div>`)}
                </div>
                <div class="qwrap">
                  <div class="qbox">
                    <div class="qgrid">
                      <div class="qh"><div>编号</div><div>名称</div><div>单位</div></div>
                      ${quotas.map((q, i) => html`<div class="qr ${i === 0 ? "on" : ""}"><div>${q[0]}</div><div class="nm">${q[1]}</div><div>m3</div></div>`)}
                    </div>
                    <div class="qfill"></div>
                    <div class="qsc">${icons.up}<i class="t"></i>${icons.down}</div>
                  </div>
                  ${this.radios()}
                </div>
              </div>
            </div>
          </div>
        </div>
      </div>
      <div class="status">
        <div class="st" style="width:188px">福建省晨曦信息科技股份有限公司</div>
        <div class="st blue" style="width:67px">内存390M</div>
        <div class="st" style="width:58px">学习版</div>
        <div class="st" style="width:66px">预算(编制)</div>
        <span style="margin-left:7px">提示信息</span>
      </div>
      <div class="task">
        <div class="ticons">
          <span class="ti f">${icons.win}</span><span class="ti">${icons.ring}</span><span class="ti">${icons.tcalc}</span>
          <span class="ti">${icons.netease}</span><span class="ti">${icons.folder}</span><span class="ti">${icons.wechat}</span>
          <span class="ti">${icons.beam}</span><span class="ti">${icons.qq}</span><span class="ti">${icons.uc}</span><span class="ti">${icons.video}</span>
        </div>
        <div class="tapp"><span class="wps">W</span>WUJ.doc * - WPS ...</div>
        <div class="tapp on">${icons.tapp}晨曦工程计价系统(...</div>
        <div class="tapp">${icons.cam}Camtasia 9</div>
        <div class="tapp">${icons.rec}录制中...</div>
        <div class="tray">
          <div class="ch"><span>CH</span>${icons.sogou}</div>
          <div class="tr-i">${icons.caretT}${icons.speaker}${icons.wifi}</div>
          <div class="clock">20:40<br />2019/10/16 星期三</div>
        </div>
      </div>
      <div class="mouse">${icons.cursor}</div>
    </div>`;
  }
}
